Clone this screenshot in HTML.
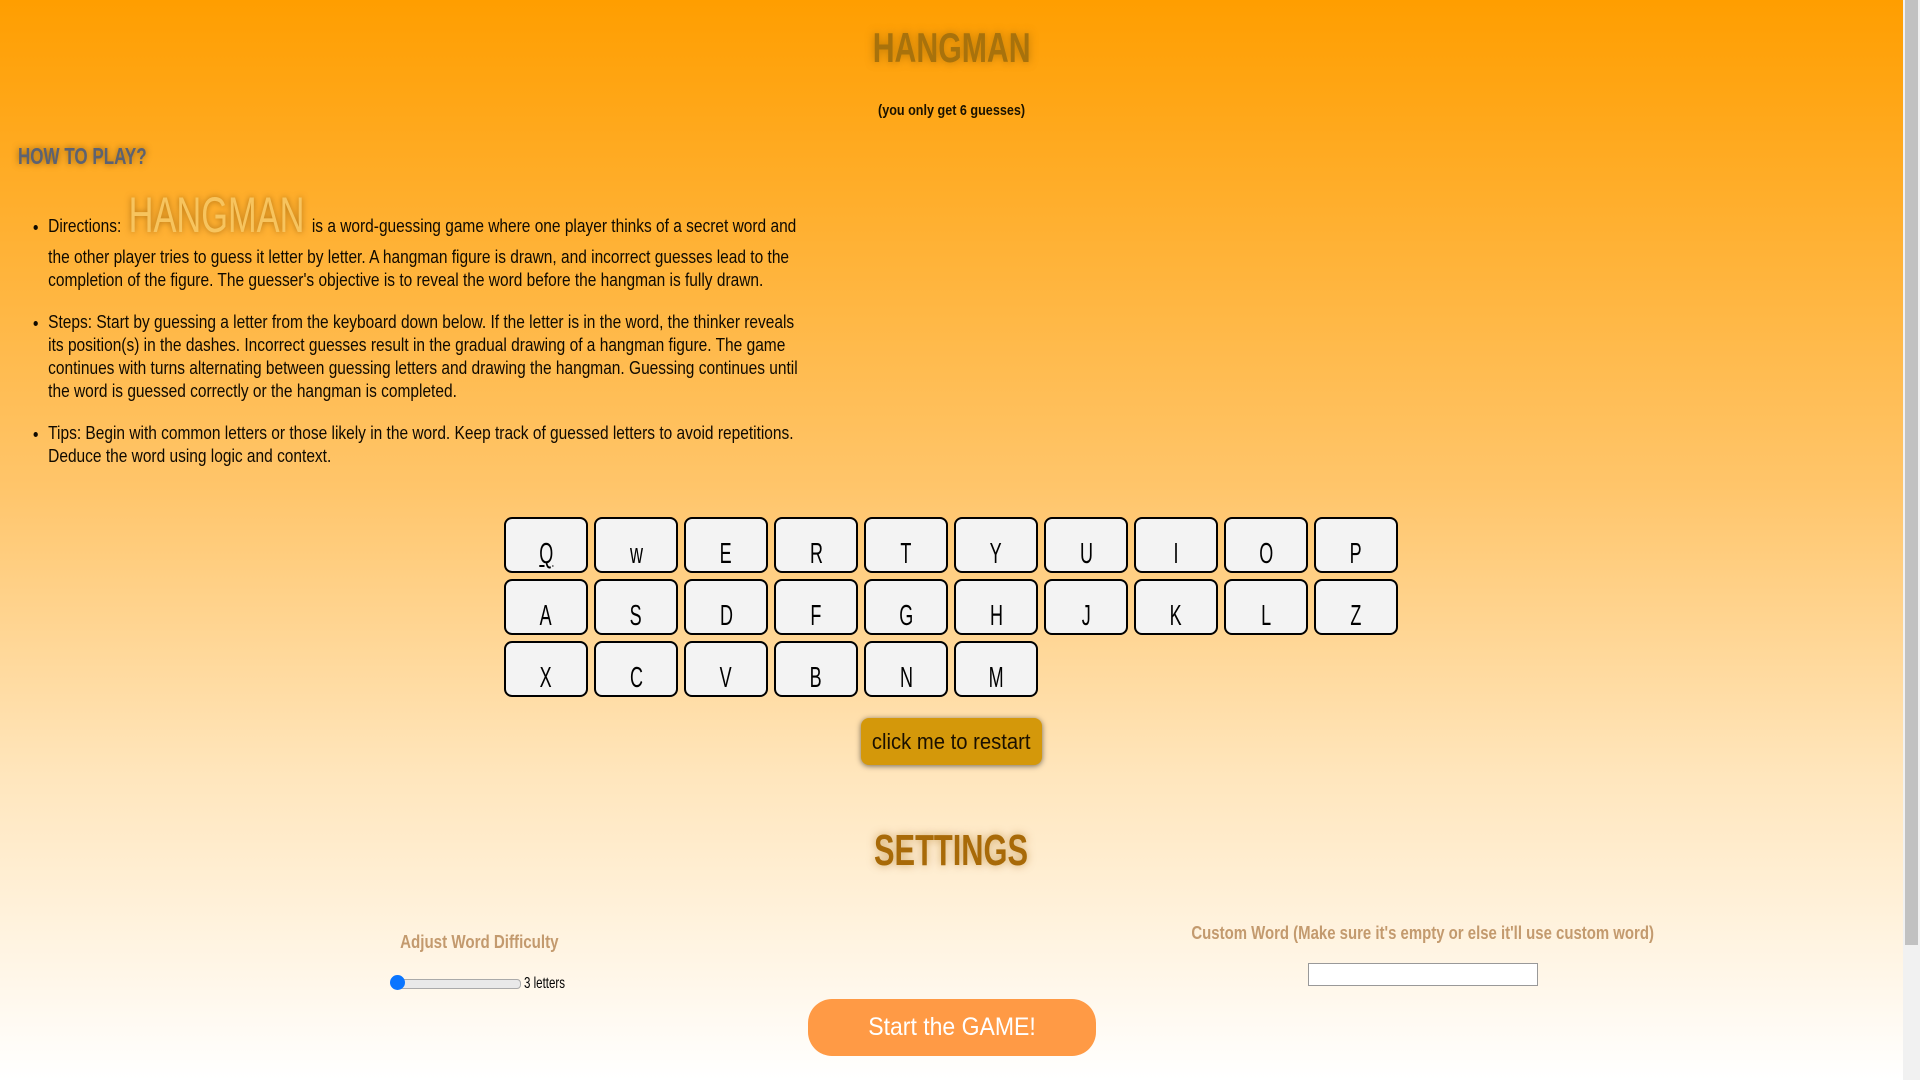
<!DOCTYPE html>
<html><head><meta charset="utf-8"><style>
html,body{margin:0;padding:0}
body{width:1920px;height:1080px;overflow:hidden;position:relative;background:linear-gradient(180deg,#ff9e00 0%,#ffc56a 45%,#ffe6bd 72%,#ffffff 100%);font-family:"Liberation Sans",sans-serif}
.abs{position:absolute}
.c{display:inline-block;transform:scaleX(.7)}
h1{position:absolute;left:0;width:1903px;top:24px;margin:0;text-align:center;font-size:42px;color:#a8720c;font-weight:bold;text-shadow:0 0 10px rgba(120,80,0,.5)}
.sub{left:0;width:1903px;top:102px;text-align:center;font-size:15px;font-weight:bold;color:#1a1200}
.how{left:18px;top:143px;font-size:23px;font-weight:bold;color:#5c6272;text-shadow:0 0 8px rgba(60,40,0,.6);transform-origin:left;transform:scaleX(.74)}
ul{position:absolute;left:0;top:200px;margin:0;padding-left:56px;width:1000px;font-size:18px;line-height:23px;color:#100a00;transform-origin:0 0;transform:scaleX(.86)}
li{margin-bottom:19px}
.big{display:inline-block;font-size:50px;color:#f7c45e;text-shadow:0 0 8px rgba(120,70,0,.6);line-height:30px;transform:scaleX(.8);margin:0 -22px}
.l1{display:inline-block;margin-bottom:8px}
.k{position:absolute;width:84px;height:56px;background:#f3f3f3;border:2.5px solid #000;border-radius:8px;box-sizing:border-box;text-align:center;font-size:29px;line-height:70px;color:#000}
.k span{display:inline-block;transform:scaleX(.62)}
.rb{left:861px;top:718px;width:181px;height:47px;background:#d4980a;border-radius:8px;box-shadow:0 1px 6px rgba(0,0,0,.55);text-align:center;line-height:47px;font-size:22px;color:#1a1000}
.set{left:0;width:1903px;top:826px;text-align:center;font-size:44px;font-weight:bold;color:#a86a08;text-shadow:0 0 10px rgba(160,100,0,.5)}
.lab{font-size:18px;font-weight:bold;color:#c39a6e;text-align:center}
.sb{left:808px;top:999px;width:288px;height:57px;background:#ff9a45;border-radius:24px;text-align:center;line-height:57px;font-size:25px;color:#fff}
.scroll{right:0;top:0;width:17px;height:1080px;background:#f1f1f1}
.thumb{right:2px;top:0;width:13px;height:945px;background:#c1c1c1}
</style></head><body>
<h1><span class="c" style="transform:scaleX(.72)">HANGMAN</span></h1>
<div class="abs sub"><span class="c" style="transform:scaleX(.84)">(you only get 6 guesses)</span></div>
<div class="abs how">HOW TO PLAY?</div>
<ul>
<li><span class="l1">Directions: <span class="big">HANGMAN</span> is a word-guessing game where one player thinks of a secret word and</span><br>the other player tries to guess it letter by letter. A hangman figure is drawn, and incorrect guesses lead to the<br>completion of the figure. The guesser's objective is to reveal the word before the hangman is fully drawn.</li>
<li>Steps: Start by guessing a letter from the keyboard down below. If the letter is in the word, the thinker reveals<br>its position(s) in the dashes. Incorrect guesses result in the gradual drawing of a hangman figure. The game<br>continues with turns alternating between guessing letters and drawing the hangman. Guessing continues until<br>the word is guessed correctly or the hangman is completed.</li>
<li>Tips: Begin with common letters or those likely in the word. Keep track of guessed letters to avoid repetitions.<br>Deduce the word using logic and context.</li>
</ul>
<div class="k" style="left:504px;top:517px"><span><u>Q</u></span></div>
<div class="k" style="left:594px;top:517px"><span>w</span></div>
<div class="k" style="left:684px;top:517px"><span>E</span></div>
<div class="k" style="left:774px;top:517px"><span>R</span></div>
<div class="k" style="left:864px;top:517px"><span>T</span></div>
<div class="k" style="left:954px;top:517px"><span>Y</span></div>
<div class="k" style="left:1044px;top:517px"><span>U</span></div>
<div class="k" style="left:1134px;top:517px"><span>I</span></div>
<div class="k" style="left:1224px;top:517px"><span>O</span></div>
<div class="k" style="left:1314px;top:517px"><span>P</span></div>
<div class="k" style="left:504px;top:579px"><span>A</span></div>
<div class="k" style="left:594px;top:579px"><span>S</span></div>
<div class="k" style="left:684px;top:579px"><span>D</span></div>
<div class="k" style="left:774px;top:579px"><span>F</span></div>
<div class="k" style="left:864px;top:579px"><span>G</span></div>
<div class="k" style="left:954px;top:579px"><span>H</span></div>
<div class="k" style="left:1044px;top:579px"><span>J</span></div>
<div class="k" style="left:1134px;top:579px"><span>K</span></div>
<div class="k" style="left:1224px;top:579px"><span>L</span></div>
<div class="k" style="left:1314px;top:579px"><span>Z</span></div>
<div class="k" style="left:504px;top:641px"><span>X</span></div>
<div class="k" style="left:594px;top:641px"><span>C</span></div>
<div class="k" style="left:684px;top:641px"><span>V</span></div>
<div class="k" style="left:774px;top:641px"><span>B</span></div>
<div class="k" style="left:864px;top:641px"><span>N</span></div>
<div class="k" style="left:954px;top:641px"><span>M</span></div>
<div class="abs rb"><span class="c" style="transform:scaleX(.92)">click me to restart</span></div>
<div class="abs set"><span class="c">SETTINGS</span></div>
<div class="abs lab" style="left:329px;width:300px;top:932px"><span class="c" style="transform:scaleX(.84)">Adjust Word Difficulty</span></div>
<div class="abs" style="left:395px;top:979px;width:124px;height:8px;background:#e9e9e9;border:1px solid #aaa;border-radius:4px"></div>
<div class="abs" style="left:390px;top:975px;width:15px;height:15px;background:#0a75ff;border-radius:50%"></div>
<div class="abs" style="left:524px;top:975px;font-size:16px;color:#000;transform-origin:left;transform:scaleX(.72)">3 letters</div>
<div class="abs lab" style="left:1023px;width:800px;top:923px"><span class="c" style="transform:scaleX(.83)">Custom Word (Make sure it's empty or else it'll use custom word)</span></div>
<div class="abs" style="left:1308px;top:963px;width:230px;height:23px;background:#fff;border:1px solid #999;box-sizing:border-box"></div>
<div class="abs sb"><span class="c" style="transform:scaleX(.92)">Start the GAME!</span></div>
<div class="abs scroll"></div><div class="abs thumb"></div>
</body></html>
